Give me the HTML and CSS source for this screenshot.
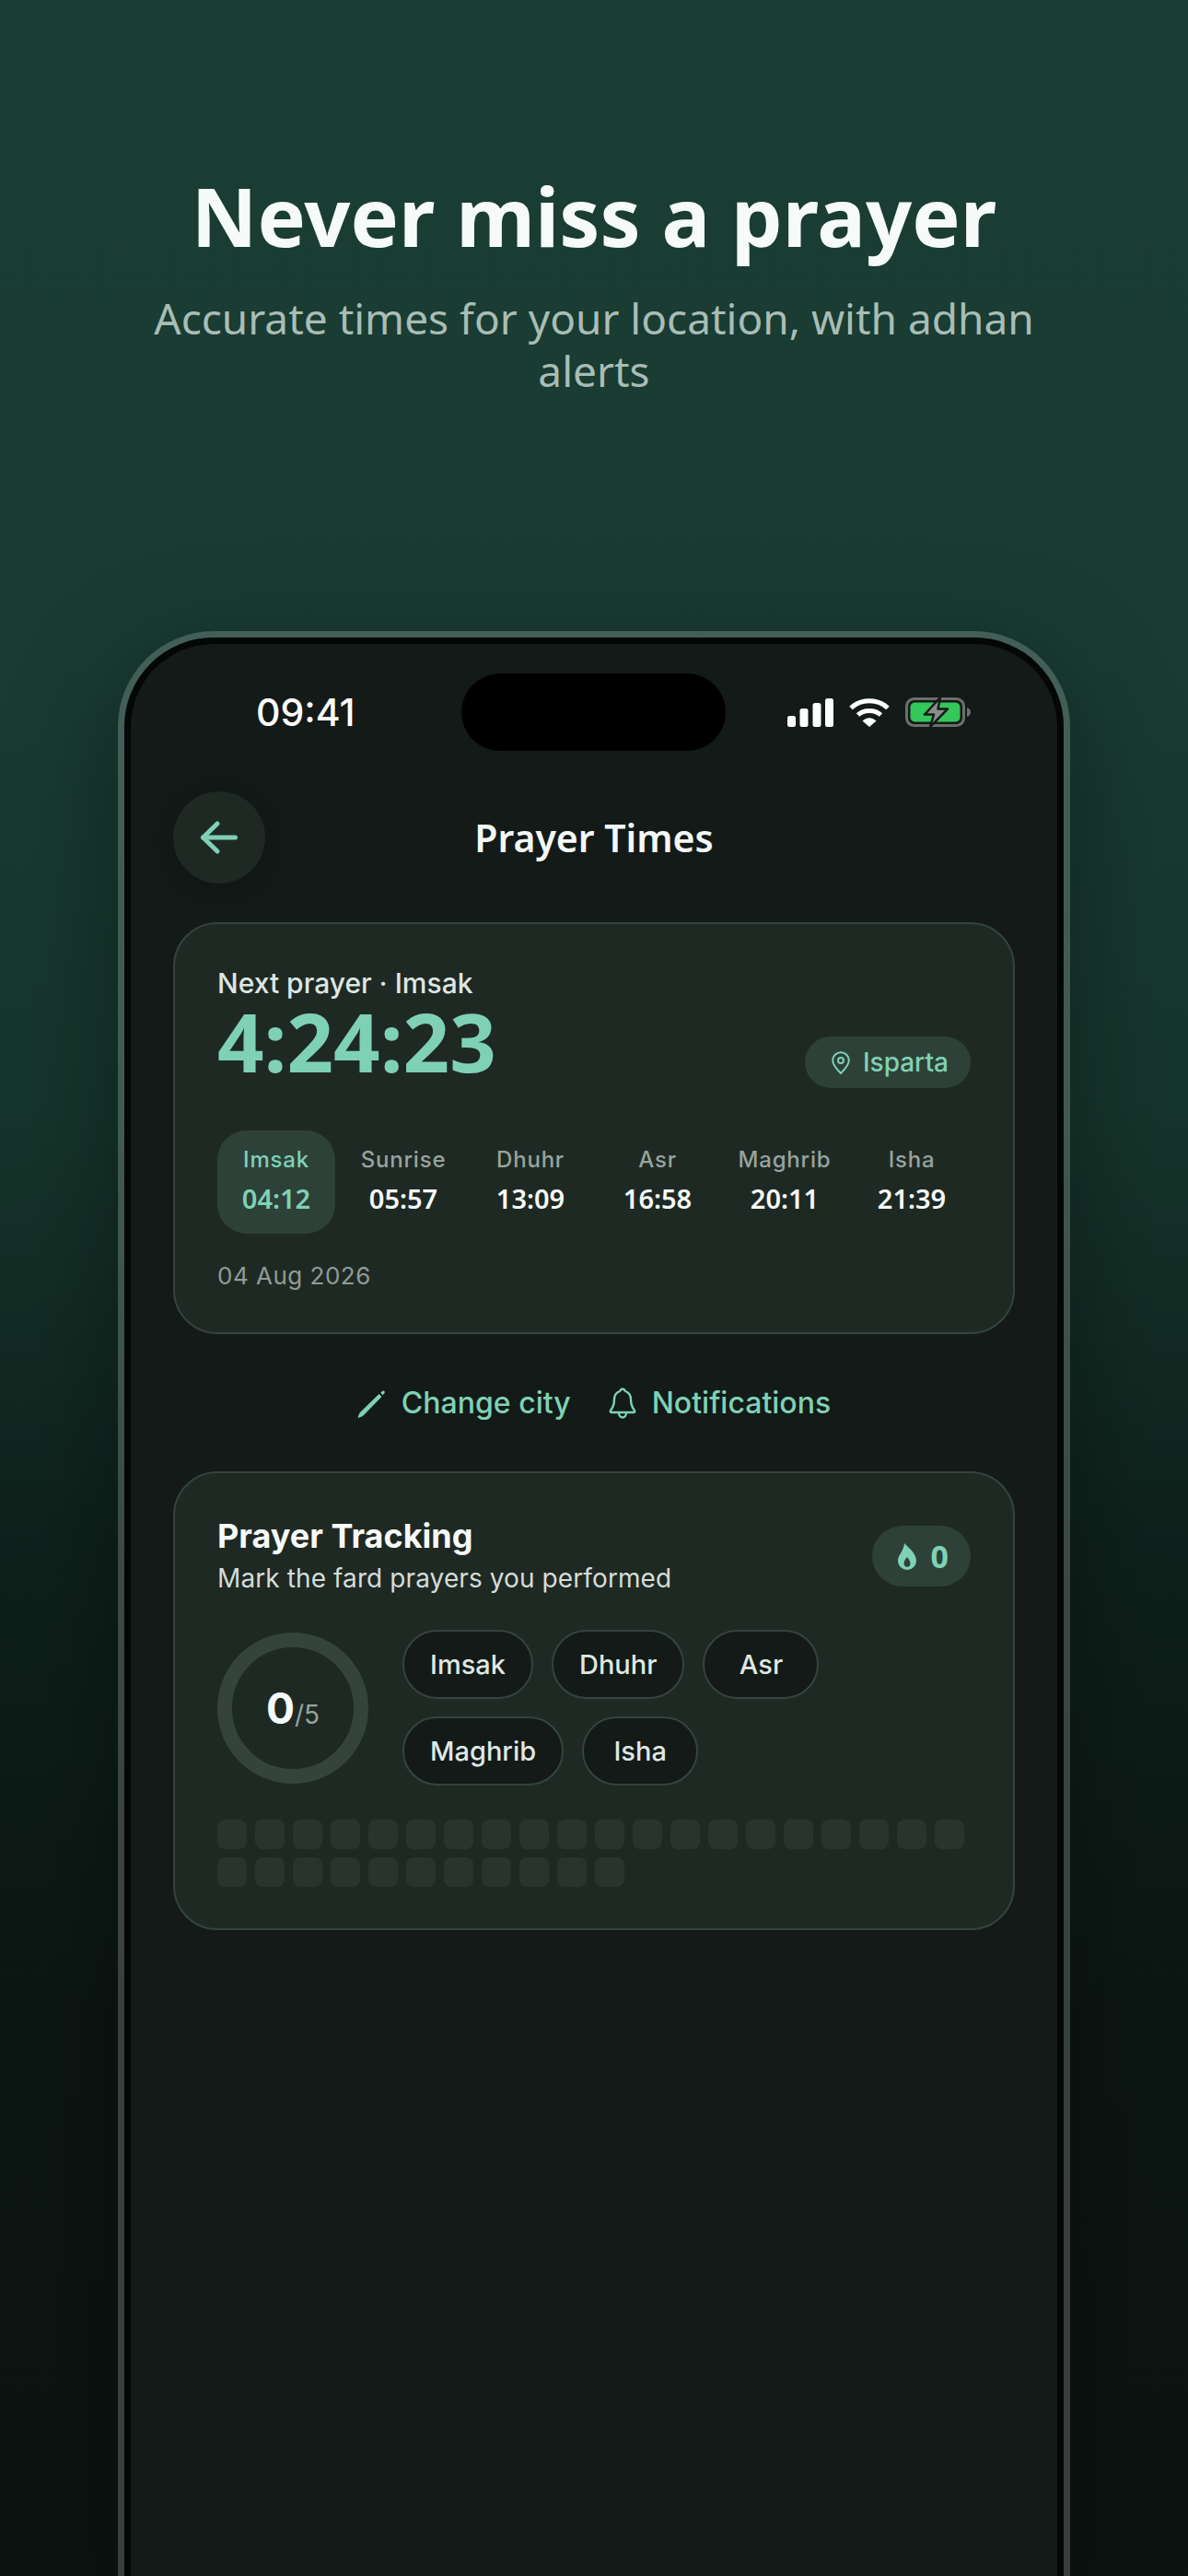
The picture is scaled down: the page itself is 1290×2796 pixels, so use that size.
FILE: index.html
```html
<!doctype html>
<html lang="en">
  <head>
    <meta charset="utf-8" />
    <meta name="viewport" content="width=device-width, initial-scale=1" />
    <title>Never miss a prayer</title>
    <link rel="stylesheet" href="styles.css">
  </head>

  <body>
    <header class="hero">
      <h1>Never miss a prayer</h1>
      <p>Accurate times for your location, with adhan alerts</p>
    </header>

    <div class="phone">
      <div class="bezel">
        <main class="screen">
          <!-- Status bar -->
          <div class="status-bar">
            <span class="clock">09:41</span>
            <div class="island"></div>
            <div class="status-icons">
              <svg width="50" height="31" viewBox="0 0 50 31" fill="#fff">
                <rect x="0" y="19" width="9" height="12" rx="2.5" />
                <rect x="13.5" y="11" width="9" height="20" rx="2.5" />
                <rect x="27.5" y="5" width="9" height="26" rx="2.5" />
                <rect x="41" y="0" width="9" height="31" rx="2.5" />
              </svg>
              <svg width="44" height="32" viewBox="0 0 44 32" fill="none" stroke="#fff" stroke-width="5">
                <path d="M2 11.5C12.5 1 31.5 1 42 11.5" />
                <path d="M9.5 19C16 13 28 13 34.5 19" />
                <path d="M14.5 25.5C19 21 25 21 29.5 25.5L22 32Z" fill="#fff" stroke="none" />
              </svg>
              <svg width="71" height="32" viewBox="0 0 71 32" fill="none">
                <rect x="1.5" y="1.5" width="62" height="29" rx="8" stroke="#6c6f6d" stroke-width="3" />
                <rect x="5.5" y="5.5" width="54" height="21" rx="5" fill="#34c759" />
                <path d="M67 11c2.5 .6 4 2.6 4 5s-1.500 4.400-4 5z" fill="#6c6f6d" />
                <path d="M38 0L21 18.500H31L27 32L46 12.500H35.500Z" fill="#8b8d8c" stroke="#131a18" stroke-width="2.500" stroke-linejoin="round" />
              </svg>
            </div>
          </div>

          <!-- Header -->
          <div class="top-bar">
            <div class="back-button">
              <svg width="44" height="44" viewBox="0 0 44 44" fill="none" stroke="#7fd1b5" stroke-width="5" stroke-linecap="round" stroke-linejoin="round">
                <path d="M4.500 22H39.500" />
                <path d="M20 7L4.500 22L20 37" />
              </svg>
            </div>
            <h2>Prayer Times</h2>
          </div>

          <!-- Next prayer card -->
          <section class="card">
            <div class="next-row">
              <div>
                <div class="next-label">Next prayer · Imsak</div>
                <div class="countdown">4:24:23</div>
              </div>
              <div class="city-pill">
                <svg width="20" height="25" viewBox="0 0 20 25" fill="none" stroke="#7fd1b5" stroke-width="2">
                  <path d="M10 1.200A8.800 8.800 0 0 1 18.800 10C18.800 15 14 20 10 24C6 20 1.200 15 1.200 10A8.800 8.800 0 0 1 10 1.200Z" stroke-linejoin="round" />
                  <circle cx="10" cy="10" r="3" />
                </svg>
                <span>Isparta</span>
              </div>
            </div>

            <div class="times-row">
              <div class="time-cell active">
                <span class="time-name">Imsak</span>
                <span class="time-value">04:12</span>
              </div>
              <div class="time-cell">
                <span class="time-name">Sunrise</span>
                <span class="time-value">05:57</span>
              </div>
              <div class="time-cell">
                <span class="time-name">Dhuhr</span>
                <span class="time-value">13:09</span>
              </div>
              <div class="time-cell">
                <span class="time-name">Asr</span>
                <span class="time-value">16:58</span>
              </div>
              <div class="time-cell">
                <span class="time-name">Maghrib</span>
                <span class="time-value">20:11</span>
              </div>
              <div class="time-cell">
                <span class="time-name">Isha</span>
                <span class="time-value">21:39</span>
              </div>
            </div>

            <div class="date">04 Aug 2026</div>
          </section>

          <!-- Actions -->
          <div class="actions">
            <div class="action">
              <svg width="32" height="32" viewBox="0 0 32 32" fill="#7fd1b5">
                <path d="M1 31.500L3 26.500L23.500 6.500L26 9L6 29.500Z" stroke="#7fd1b5" stroke-width="1" stroke-linejoin="round" />
                <path d="M25.200 4.800L26.800 3.200C27.600 2.400 28.600 2.400 29.300 3.100C30 3.800 30 4.800 29.200 5.600L27.600 7.200Z" />
              </svg>
              <span>Change city</span>
            </div>
            <div class="action">
              <svg width="32" height="34" viewBox="0 0 32 34" fill="none" stroke="#7fd1b5" stroke-width="2.400" stroke-linejoin="round">
                <path d="M16 1.500C18 1.500 18.500 3 19 4C23 5.500 25 8.500 25 13C25 20 27 22.500 29 25C29.500 26 29 27 28 27H4C3 27 2.500 26 3 25C5 22.500 7 20 7 13C7 8.500 9 5.500 13 4C13.500 3 14 1.500 16 1.500Z" />
                <path d="M12 27.500C12 30.500 14 32.500 16 32.500C18 32.500 20 30.500 20 27.500" />
              </svg>
              <span>Notifications</span>
            </div>
          </div>

          <!-- Tracking card -->
          <section class="card tracking">
            <div class="tracking-head">
              <div>
                <h3>Prayer Tracking</h3>
                <p>Mark the fard prayers you performed</p>
              </div>
              <div class="streak-pill">
                <svg width="20" height="29" viewBox="0 0 20 29" fill="#7fd1b5">
                  <path d="M7 0C9 3 20 10 20 19A10 10 0 0 1 0 19C0 13 6 9 7 0Z" />
                  <path d="M10 15C11.500 17 13.500 19 13.500 22A3.500 3.700 0 0 1 6.500 22C6.500 19 8.500 17 10 15Z" fill="#2d4138" />
                </svg>
                <span>0</span>
              </div>
            </div>

            <div class="tracking-body">
              <div class="ring">
                <span class="ring-count">0</span><span class="ring-total">/5</span>
              </div>
              <div class="chips">
                <div class="chip">Imsak</div>
                <div class="chip">Dhuhr</div>
                <div class="chip">Asr</div>
                <div class="chip">Maghrib</div>
                <div class="chip">Isha</div>
              </div>
            </div>

            <div class="days">
              <i></i><i></i><i></i><i></i><i></i><i></i><i></i><i></i><i></i><i></i>
              <i></i><i></i><i></i><i></i><i></i><i></i><i></i><i></i><i></i><i></i>
              <i></i><i></i><i></i><i></i><i></i><i></i><i></i><i></i><i></i><i></i>
              <i></i>
            </div>
          </section>
        </main>
      </div>
    </div>
  </body>
</html>
```

FILE: styles.css
```css
* {
  box-sizing: border-box;
}

html,
body {
  margin: 0;
  height: 2796px;
  overflow: hidden;
}

body {
  font-family: "Inter", "Liberation Sans", sans-serif;
  color: #f4f8f6;
  background: linear-gradient(180deg, #1a3d34 0%, #193b32 26%, #16352c 43%, #0f211c 60%, #0c1613 78%, #0c1412 100%);
}

.hero {
  height: 685px;
  padding: 181px 150px 0;
  text-align: center;
  font-family: "Noto Sans", sans-serif;
}

.hero h1 {
  margin: 0 0 30px;
  font-size: 88px;
  line-height: 106px;
  font-weight: 700;
  color: #f6faf8;
}

.hero p {
  margin: 0;
  font-size: 46px;
  line-height: 57px;
  color: #a9bdb5;
}

/* phone runs off the bottom of the picture, so only the top corners are round */
.phone {
  width: 1034px;
  height: 2111px;
  margin: 0 auto;
  border: 7px solid rgba(255, 255, 255, 0.18);
  border-bottom: 0;
  border-radius: 104px 104px 0 0;
  box-shadow: 0 30px 120px rgba(0, 0, 0, 0.35);
}

.bezel {
  height: 100%;
  background: #040706;
  padding: 7px 7px 0;
  border-radius: 97px 97px 0 0;
}

.screen {
  height: 100%;
  padding: 32px 46px 0;
  background: #131a18;
  border-radius: 90px 90px 0 0;
}

/* status bar */
.status-bar {
  display: flex;
  align-items: center;
  height: 84px;
  padding: 0 47px 0 90px;
}

.clock {
  width: 223px;
  font-size: 41px;
  font-weight: 500;
  color: #fff;
}

.island {
  width: 287px;
  height: 84px;
  background: #000;
  border-radius: 42px;
}

.status-icons {
  display: flex;
  align-items: center;
  gap: 17px;
  margin-left: 67px;
}

.status-icons svg {
  display: block;
}

.top-bar {
  display: grid;
  grid-template-columns: 100px 1fr 100px;
  align-items: center;
  margin-top: 44px;
  margin-bottom: 42px;
}

.top-bar h2 {
  margin: 0;
  text-align: center;
  font-family: "Noto Sans", sans-serif;
  font-size: 41px;
  font-weight: 600;
  color: #f4f8f6;
}

.back-button {
  display: flex;
  align-items: center;
  justify-content: center;
  width: 100px;
  height: 100px;
  border-radius: 50%;
  background: #1f2924;
  box-shadow: 0 4px 24px rgba(0, 0, 0, 0.2);
}

.card {
  padding: 46px;
  background: #1f2924;
  border: 2px solid #34443d;
  border-radius: 48px;
}

.next-row {
  display: flex;
  justify-content: space-between;
  align-items: flex-end;
}

.next-label {
  font-size: 30px;
  line-height: 36px;
  font-weight: 500;
  color: #dde6e1;
}

.countdown {
  margin-bottom: 6px;
  font-family: "Noto Sans", sans-serif;
  font-size: 88.5px;
  line-height: 90px;
  font-weight: 700;
  color: #7fd1b5;
}

.city-pill {
  display: flex;
  align-items: center;
  gap: 14px;
  height: 56px;
  padding: 0 24px 0 29px;
  border-radius: 28px;
  background: #2d4138;
  color: #7fd1b5;
  font-size: 28px;
  font-weight: 500;
}

.times-row {
  display: flex;
  gap: 10px;
  margin-top: 46px;
}

.time-cell {
  display: flex;
  flex-direction: column;
  align-items: center;
  gap: 8px;
  flex: 1;
  padding: 17px 0 19px;
  border-radius: 32px;
}

.time-cell.active {
  background: #2d4138;
}

.time-name {
  font-size: 24px;
  line-height: 30px;
  font-weight: 500;
  letter-spacing: 0.8px;
  color: #97a49e;
}

.time-value {
  font-family: "Noto Sans", sans-serif;
  font-size: 29px;
  line-height: 38px;
  font-weight: 600;
  color: #f6faf8;
}

.active .time-name,
.active .time-value {
  color: #7fd1b5;
}

.date {
  margin-top: 31px;
  font-size: 26px;
  line-height: 30px;
  letter-spacing: 0.5px;
  color: #8f9c96;
}

.actions {
  display: flex;
  justify-content: center;
  align-items: center;
  gap: 40px;
  height: 149px;
}

.action {
  display: flex;
  align-items: center;
  gap: 16px;
  font-size: 32px;
  font-weight: 500;
  color: #7fd1b5;
}

.action svg {
  display: block;
}

.tracking {
  padding-top: 47px;
  padding-bottom: 45px;
}

.tracking-head {
  display: flex;
  justify-content: space-between;
  align-items: flex-start;
}

.tracking-head h3 {
  margin: 0 0 7px;
  font-size: 36px;
  line-height: 42px;
  font-weight: 700;
  color: #f6faf8;
}

.tracking-head p {
  margin: 0;
  font-size: 28px;
  line-height: 36px;
  letter-spacing: 0.1px;
  color: #d4ddd8;
}

.streak-pill {
  display: flex;
  align-items: center;
  gap: 16px;
  height: 66px;
  margin-top: 10px;
  padding: 0 24px 0 28px;
  border-radius: 33px;
  background: #2d4138;
  color: #7fd1b5;
  font-family: "Noto Sans", sans-serif;
  font-size: 34px;
  font-weight: 700;
}

.tracking-body {
  display: flex;
  align-items: center;
  gap: 37px;
  margin-top: 38px;
}

.ring {
  display: flex;
  align-items: baseline;
  justify-content: center;
  width: 164px;
  height: 164px;
  padding-top: 38px;
  border: 16px solid #34443d;
  border-radius: 50%;
}

.ring-count {
  font-size: 46px;
  line-height: 56px;
  font-weight: 700;
  color: #f6faf8;
}

.ring-total {
  font-size: 28px;
  color: #97a49e;
}

.chips {
  display: flex;
  flex-wrap: wrap;
  gap: 19px 20px;
  flex: 1;
}

.chip {
  display: flex;
  align-items: center;
  justify-content: center;
  min-width: 126px;
  height: 75px;
  padding: 0 28px;
  border: 2px solid #34443d;
  border-radius: 38px;
  background: #131a18;
  font-size: 29px;
  font-weight: 500;
  color: #dfe8e3;
}

.days {
  display: flex;
  flex-wrap: wrap;
  gap: 9px;
  margin-top: 37px;
}

.days i {
  width: 32px;
  height: 32px;
  border-radius: 8px;
  background: #27352e;
}
```
